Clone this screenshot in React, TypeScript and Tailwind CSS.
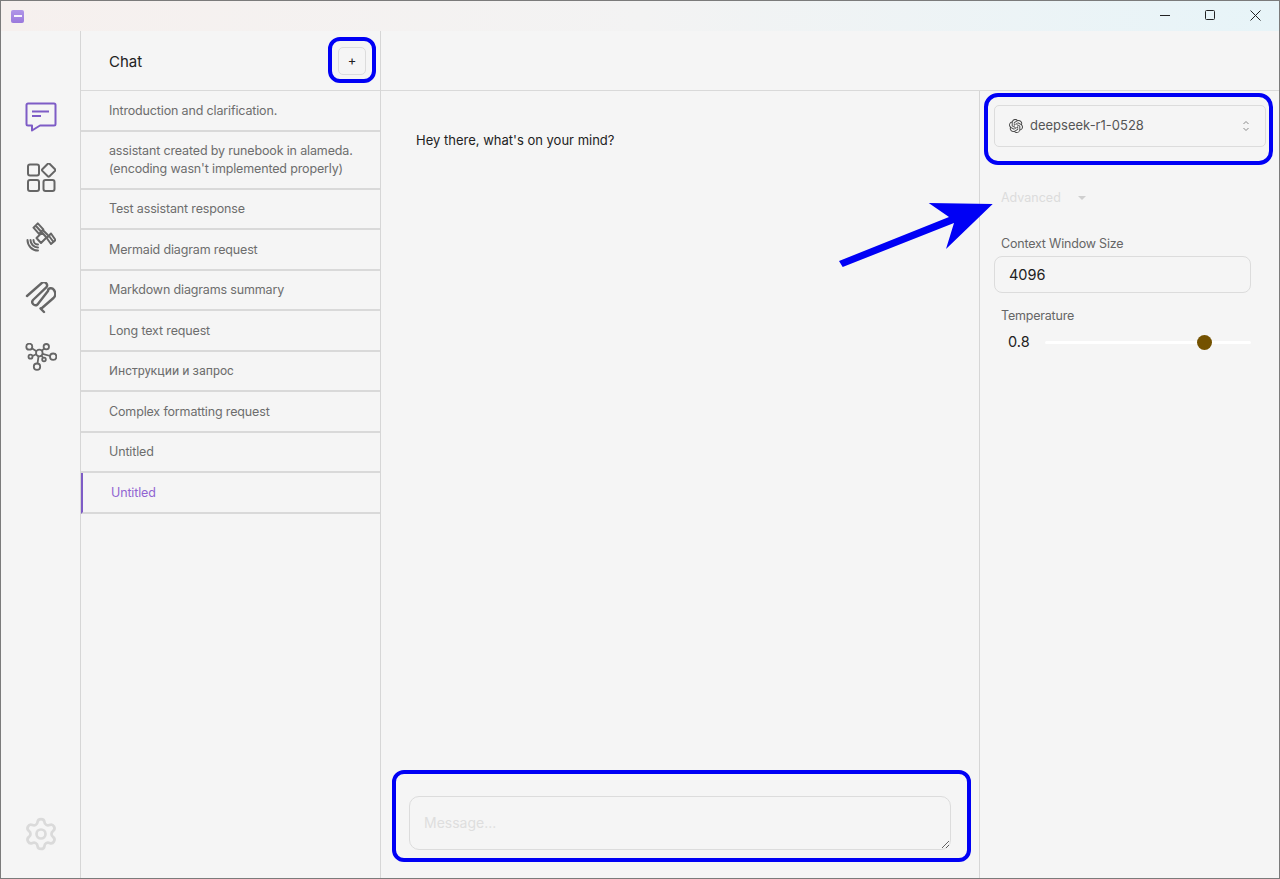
import { Settings } from "lucide-react";
import { SiOpenai } from "react-icons/si";

const chats = [
  { title: "Introduction and clarification.", h: "h-[41px]", font: "" },
  { title: "assistant created by runebook in alameda. (encoding wasn't implemented properly)", h: "h-[58px]", font: "" },
  { title: "Test assistant response", h: "h-[40px]", font: "" },
  { title: "Mermaid diagram request", h: "h-[41px]", font: "" },
  { title: "Markdown diagrams summary", h: "h-[40px]", font: "" },
  { title: "Long text request", h: "h-[41px]", font: "" },
  { title: "Инструкции и запрос", h: "h-[40px]", font: "font-['Roboto',sans-serif] !tracking-normal" },
  { title: "Complex formatting request", h: "h-[41px]", font: "" },
  { title: "Untitled", h: "h-[40px]", font: "" },
];

const ChatIcon = () => (
  <svg width="32" height="30" viewBox="0 0 32 30" fill="none" stroke="#7e5cc6" strokeWidth="2" strokeLinejoin="round">
    <path d="M3 1.500h26a1.500 1.500 0 0 1 1.500 1.500v19a1.500 1.500 0 0 1-1.500 1.500H15l-8 5v-5H3A1.500 1.500 0 0 1 1.500 22V3A1.500 1.500 0 0 1 3 1.500z" />
    <path d="M7 9.500h17M7 14h9" />
  </svg>
);

// the drawn icons below use viewBoxes in page coordinates, easier to line up with the reference
const AppsIcon = () => (
  <svg width="31" height="30" viewBox="25 163 31 30" fill="none" stroke="#666" strokeWidth="2">
    <rect x="28" y="164.500" width="11" height="11" rx="2" />
    <rect x="28" y="180" width="11" height="11" rx="2" />
    <rect x="43.500" y="180" width="11" height="11" rx="2" />
    <path d="M47.800 163.800a1.200 1.200 0 0 1 1.700 0l5.500 5.400a1.200 1.200 0 0 1 0 1.700l-5.500 5.400a1.200 1.200 0 0 1-1.700 0l-5.500-5.400a1.200 1.200 0 0 1 0-1.700z" />
  </svg>
);

const SatelliteIcon = () => (
  <svg width="31" height="30" viewBox="25 222 31 30" fill="none" stroke="#666" strokeWidth="2" strokeLinejoin="round" strokeLinecap="round">
    <path d="M33.500 227.700l4.300-4.300 5.500 6-4.300 4.500zM36 226l5 5.500" />
    <path d="M46.700 238l4.300-4.500 4.500 6.500-4.500 4zM49 236l4.500 6" />
    <path d="M43.300 230.500l4.500 4.500" />
    <path d="M36.500 238l5.500-5.500 4.500 5-5.500 5.500z" />
    <path d="M33.500 240a4.500 4.500 0 0 0 4.500 4.500M30.500 240a7.500 7.500 0 0 0 7.500 7.500M27.500 240a10.500 10.500 0 0 0 10.500 10.500" />
  </svg>
);

const ClipIcon = () => (
  <svg width="31" height="33" viewBox="25 282 31 33" fill="none" stroke="#666" strokeWidth="2.400" strokeLinecap="round" strokeLinejoin="round">
    <path d="M27 296L42 282.800a3.200 3.200 0 0 1 4.500 4.400L33 300a3.200 3.200 0 0 0 4.500 4.500L48 291C48 288 52 287 54 290S55.500 296 53.500 298L42 308l-1.500.5 3.500 3.500" />
  </svg>
);

const GraphIcon = () => (
  <svg width="33" height="30" viewBox="24 343 33 30" fill="none" stroke="#666" strokeWidth="1.800">
    <circle cx="29.300" cy="346.700" r="3" />
    <circle cx="46.300" cy="346.700" r="2.700" />
    <circle cx="39.300" cy="353" r="3.300" />
    <circle cx="30.500" cy="356.700" r="2" />
    <circle cx="44" cy="359.500" r="1.800" />
    <circle cx="53.200" cy="356.700" r="3.200" />
    <circle cx="37" cy="366.700" r="3.200" />
    <path d="M31.800 348.300l4.700 3M44.500 348.600l-3 2.200M32.500 356l3.800-1.800M42.500 353.800l7.800 2.200M38.500 356.300l-1 7.200M41.500 355.500l1.500 2.300" />
  </svg>
);

export default function App() {
  return (
    <div className="relative flex h-[879px] w-[1280px] flex-col overflow-hidden border border-[#7b7b7b] bg-[#f5f5f5] font-['Inter',sans-serif]">
      {/* Title bar */}
      <div className="flex h-[30px] shrink-0 items-center justify-between bg-gradient-to-r from-[#f6f0ee] via-[#f3f3f3] to-[#e7f4f8]">
        <div className="ml-[10px] flex h-[13px] w-[13px] items-center justify-center rounded-[2px] bg-gradient-to-b from-[#b096e8] to-[#9a78dc]">
          <div className="h-[1.500px] w-[8px] bg-white/90" />
        </div>
        <div className="flex items-center">
          <svg width="46" height="30" viewBox="0 0 46 30" stroke="#222" fill="none" strokeWidth="1"><path d="M19 14.500h10" /></svg>
          <svg width="46" height="30" viewBox="0 0 46 30" stroke="#222" fill="none" strokeWidth="1"><rect x="18.500" y="9.500" width="9" height="9" rx="1" /></svg>
          <svg width="46" height="30" viewBox="0 0 46 30" stroke="#222" fill="none" strokeWidth="1"><path d="M17.500 9.500l10 10M27.500 9.500l-10 10" /></svg>
        </div>
      </div>

      <div className="flex min-h-0 flex-1">
        {/* Icon rail */}
        <div className="flex w-[80px] shrink-0 flex-col items-center border-r border-[#d6d6d6]">
          <div className="mt-[71px] flex flex-col items-center">
            <div className="flex h-[30px] items-center"><ChatIcon /></div>
            <div className="mt-[31px] flex h-[30px] items-center"><AppsIcon /></div>
            <div className="mt-[29px] flex h-[30px] items-center"><SatelliteIcon /></div>
            <div className="mt-[30px] flex h-[33px] items-center"><ClipIcon /></div>
            <div className="mt-[28px] flex h-[30px] items-center"><GraphIcon /></div>
          </div>
          <Settings className="mb-[26px] mt-auto h-[36px] w-[36px] text-[#dadada]" strokeWidth={1.800} />
        </div>

        {/* Chat list */}
        <div className="flex w-[300px] shrink-0 flex-col border-r border-[#d6d6d6]">
          <div className="flex h-[60px] shrink-0 items-center justify-between border-b border-[#d9d9d9] pl-[28px] pr-[14px]">
            <span className="block pt-[3px] text-[15px] text-[#222]">Chat</span>
            <button className="flex h-[28px] w-[28px] items-center justify-center rounded-[5px] border border-[#dcdcdc] text-[13px] text-[#222]">+</button>
          </div>
          {chats.map((c) => (
            <div key={c.title} className={`flex ${c.h} shrink-0 items-center border-b-2 border-[#d9d9d9] pl-[28px] pr-[20px] text-[12.500px] leading-[18px] tracking-[-0.15px] text-[#6d6d6d] ${c.font}`}>
              <span>{c.title}</span>
            </div>
          ))}
          <div className="flex h-[41px] shrink-0 items-center border-b-2 border-l-2 border-b-[#d9d9d9] border-l-[#7e5cc6] pl-[28px] pt-[2px] text-[12.500px] tracking-[-0.15px] text-[#9164d2]">
            Untitled
          </div>
        </div>

        {/* Main column */}
        <div className="flex min-w-0 flex-1 flex-col">
          <div className="h-[60px] shrink-0 border-b border-[#d9d9d9]" />
          <div className="flex min-h-0 flex-1">
            <div className="flex w-[599px] shrink-0 flex-col border-r border-[#d6d6d6]">
              <div className="flex-1 pl-[35px] pt-[39px] text-[13px] leading-[20px] text-[#222]">Hey there, what's on your mind?</div>
              <div className="px-[28px] pb-[28px]">
                <textarea
                  placeholder="Message..."
                  className="block h-[54px] w-[542px] rounded-[10px] border border-[#dcdcdc] bg-transparent px-[14px] py-[16px] text-[14px] leading-[20px] outline-none placeholder:text-[#dedede]"
                />
              </div>
            </div>

            {/* Settings panel */}
            <div className="flex-1 px-[14px] pt-[14px]">
              <div className="flex h-[42px] w-[272px] items-center rounded-[5px] border border-[#dcdcdc] pl-[14px] pr-[15px]">
                <SiOpenai className="h-[14px] w-[14px] text-[#444]" />
                <span className="ml-[7px] text-[13px] text-[#555]">deepseek-r1-0528</span>
                <svg className="ml-auto" width="8" height="12" viewBox="0 0 8 12" fill="none" stroke="#8a8a8a" strokeWidth="1"><path d="M1.500 4l2.500-2.500 2.500 2.500M1.500 8l2.500 2.500 2.500-2.500" /></svg>
              </div>
              <div className="mt-[41px] flex items-center pl-[7px] text-[12.500px] leading-[20px] text-[#dcdcdc]">
                Advanced
                <span className="ml-[17px] h-0 w-0 border-x-[4px] border-t-[4px] border-x-transparent border-t-[#cfcfcf]" />
              </div>
              <div className="mt-[27px] pl-[7px] text-[12.500px] leading-[18px] tracking-[-0.2px] text-[#666]">Context Window Size</div>
              <div className="mt-[3px] flex h-[37px] w-[257px] items-center rounded-[8px] border border-[#dcdcdc] pl-[14px] text-[14.500px] text-[#222]">4096</div>
              <div className="mt-[14px] pl-[7px] text-[12.500px] leading-[18px] tracking-[-0.2px] text-[#666]">Temperature</div>
              <div className="mt-[9px] flex h-[16px] w-[257px] items-center">
                <span className="ml-[14px] w-[37px] shrink-0 text-[14.500px] text-[#222]">0.8</span>
                <div className="relative h-[3px] flex-1 rounded-full bg-white">
                  <div className="absolute left-[152px] top-[-6px] h-[15px] w-[15px] rounded-full bg-[#745200]" />
                </div>
              </div>
            </div>
          </div>
        </div>
      </div>

      {/* Annotation overlays */}
      <div className="absolute left-[327px] top-[36px] h-[46px] w-[48px] rounded-[12px] border-[4px] border-[#0000f5]" />
      <div className="absolute left-[983px] top-[92px] h-[72px] w-[289px] rounded-[14px] border-[4px] border-[#0000f5]" />
      <div className="absolute left-[391px] top-[769px] h-[92px] w-[579px] rounded-[12px] border-[4px] border-[#0000f5]" />
      <svg className="absolute left-[836px] top-[200px]" width="160" height="70" viewBox="0 0 160 70" fill="#0000f5">
        <path d="M5.700 66L2 60 112 16 91.700 2 155.700 3 109 48 117 22z" />
      </svg>
    </div>
  );
}
